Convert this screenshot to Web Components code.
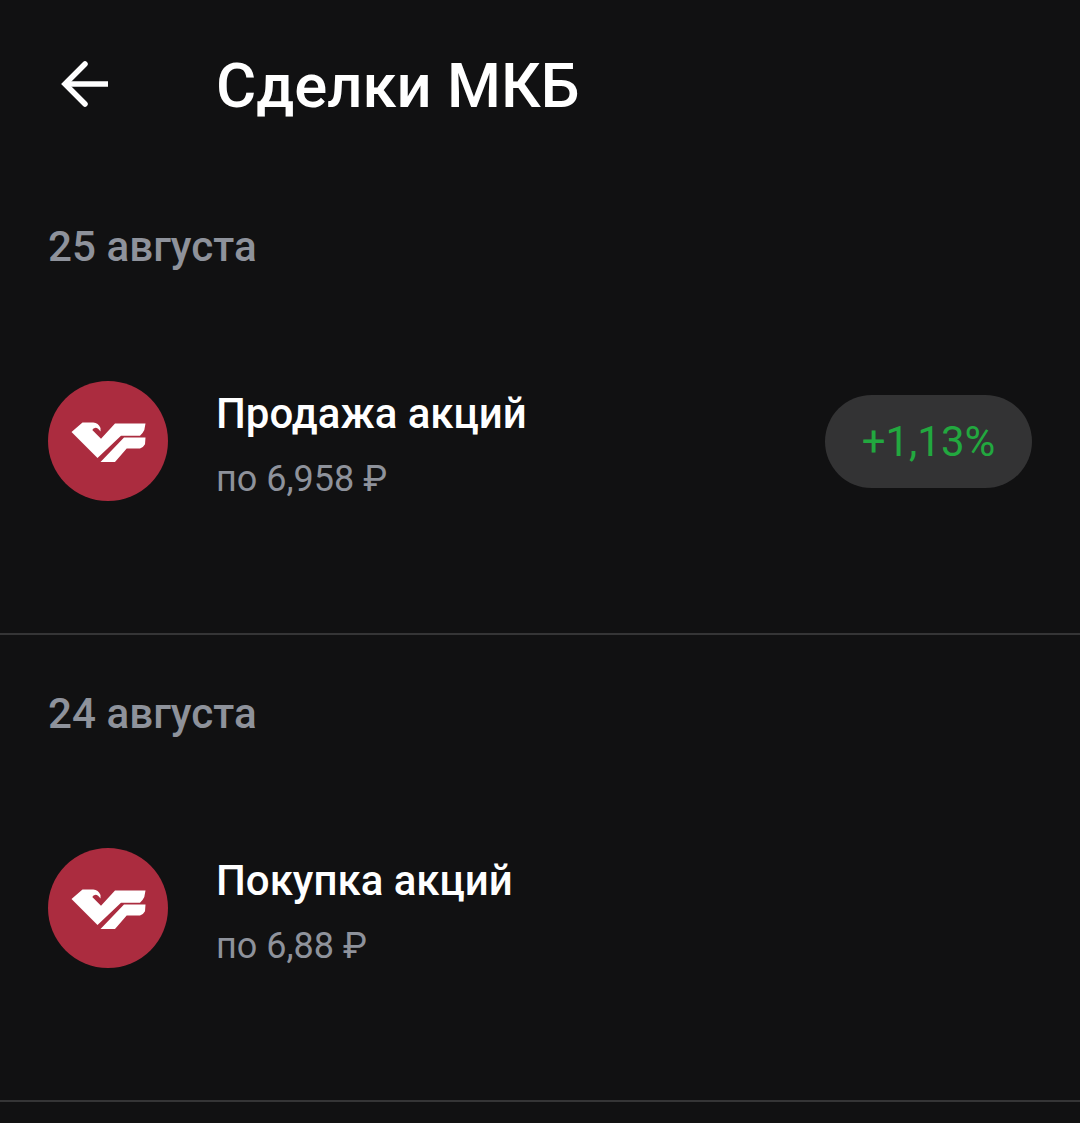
<!DOCTYPE html>
<html lang="ru">
<head>
<meta charset="utf-8">
<title>Сделки МКБ</title>
<style>
    html, body{
        margin:0;
        padding:0;
        background:#111112;
        font-family:Roboto, "Liberation Sans", sans-serif;
    }
</style>
</head>
<body>

<template id="tpl-header">
    <style>
        :host{
            display:flex;
            align-items:center;
            height:168px;
            padding:0 0 0 59px;
            box-sizing:border-box;
            color:#fff;
        }
        svg{
            width:50px;
            height:50px;
            margin-right:107px;
            margin-top:-1px;
            flex:none;
        }
        h1{
            margin:0;
            font-size:61.6px;
            font-weight:500;
            line-height:66px;
            margin-top:4px;
        }
    </style>
    <svg viewBox="0 0 50 50" fill="none" stroke="#fff" stroke-width="5.500">
        <path d="M49 25H6"/>
        <path stroke-linecap="round" d="M26 5L6 25L26 45"/>
    </svg>
    <h1><slot></slot></h1>
</template>

<template id="tpl-section">
    <style>
        :host{
            display:block;
            height:467px;
            box-sizing:border-box;
            padding:56px 48px 0;
            border-bottom:2px solid #353536;
        }
        .data{
            font-size:42.2px;
            line-height:46px;
            font-weight:500;
            color:#8e929b;
            margin-bottom:111px;
        }
    </style>
    <div class="data"><slot name="data"></slot></div>
    <slot></slot>
</template>

<template id="tpl-row">
    <style>
        :host{
            display:flex;
            align-items:center;
            height:120px;
        }
        svg{
            width:120px;
            height:120px;
            flex:none;
            margin-right:48px;
        }
        .textos{
            flex:1;
            display:flex;
            flex-direction:column;
            gap:21px;
            padding-top:8px;
        }
        .titulo{
            font-size:42px;
            line-height:47px;
            font-weight:500;
            color:#fff;
        }
        .sub{
            font-size:36px;
            line-height:42px;
            color:#8e929b;
        }
    </style>
    <svg viewBox="0 0 120 120">
        <circle cx="60" cy="60" r="60" fill="#ab2c3f"/>
        <path fill="#fff" d="M23.500 51L34.500 41.500H45.300Q50.300 41.700 52.500 47L52.500 50.500Q50 46.700 47.700 46.700Q45 46.900 44.300 49L53 57.800L67 42.500H97.500L96.300 49Q95 52 92 54.700H73L49.500 77Z"/>
        <path fill="#fff" d="M76 56.500H97.500L97 63.300Q95.500 66.300 92 67.500H78.700L67 81H52.500Z"/>
    </svg>
    <div class="textos">
        <div class="titulo"><slot name="titulo"></slot></div>
        <div class="sub"><slot name="sub"></slot></div>
    </div>
    <slot></slot>
</template>

<template id="tpl-pill">
    <style>
        :host{
            display:flex;
            align-items:center;
            justify-content:center;
            width:207px;
            height:93px;
            border-radius:47px;
            background:#333334;
            color:#22a83f;
            font-size:42px;
        }
    </style>
    <slot></slot>
</template>

<script>
function registrar(nome, idTemplate) {
    customElements.define(nome, class extends HTMLElement {
        constructor() {
            super();
            this.attachShadow({ mode: 'open' });
            this.shadowRoot.appendChild(document.getElementById(idTemplate).content.cloneNode(true));
        }
    });
}

registrar('deal-header', 'tpl-header');
registrar('deal-section', 'tpl-section');
registrar('deal-row', 'tpl-row');
registrar('deal-pill', 'tpl-pill');
</script>

<deal-header>Сделки МКБ</deal-header>

<deal-section>
    <span slot="data">25 августа</span>
    <deal-row>
        <span slot="titulo">Продажа акций</span>
        <span slot="sub">по 6,958 ₽</span>
        <deal-pill>+1,13%</deal-pill>
    </deal-row>
</deal-section>

<deal-section>
    <span slot="data">24 августа</span>
    <deal-row>
        <span slot="titulo">Покупка акций</span>
        <span slot="sub">по 6,88 ₽</span>
    </deal-row>
</deal-section>

</body>
</html>
